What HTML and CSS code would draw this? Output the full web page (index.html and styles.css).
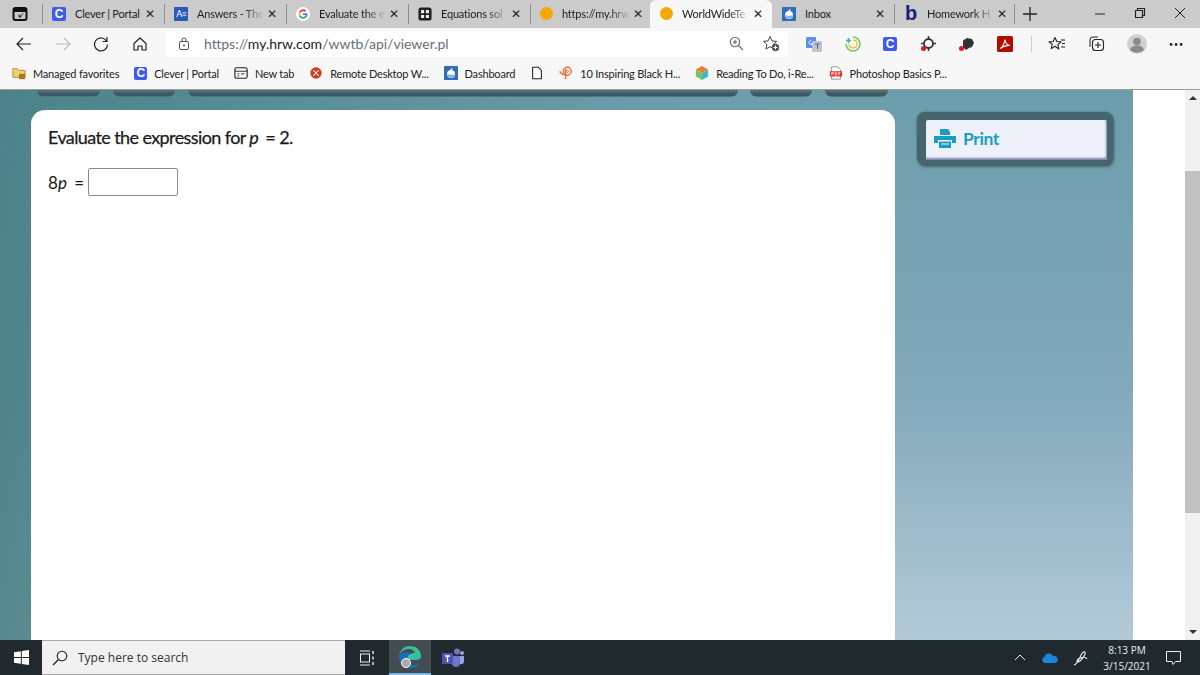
FILE: index.html
```html
<!DOCTYPE html>
<html>
<head>
    <meta charset="UTF-8">
    <title>WorldWideTeacher</title>
    <link rel="stylesheet" href="styles.css">
</head>
<body>
    <div class="tabstrip">
        <div class="tab-actions">
            <svg width="16" height="16" viewBox="0 0 16 16"><rect x="1.500" y="2" width="13" height="12" rx="2" fill="none" stroke="#111" stroke-width="2"/><rect x="2" y="3" width="12" height="3" fill="#111"/><path d="M11 7.500 7.500 11M7 8.500V11h2.500" fill="none" stroke="#111"/></svg>
        </div>
        <div class="tab">
            <span class="fav fav-clever">C</span>
            <span class="tab-title">Clever | Portal</span>
            <span class="tab-x">&#10005;</span>
        </div>
        <div class="tab">
            <span class="fav fav-answers">A&#8801;</span>
            <span class="tab-title fade">Answers - The</span>
            <span class="tab-x">&#10005;</span>
        </div>
        <div class="tab">
            <svg class="fav" viewBox="0 0 16 16"><circle cx="8" cy="8" r="8" fill="#fff"/><path d="M8 4.800a3.200 3.200 0 0 1 2.200.8l1.500-1.500A5.300 5.300 0 0 0 3.300 5.600l1.700 1.300A3.200 3.200 0 0 1 8 4.800z" fill="#ea4335"/><path d="M5 9.100 3.300 10.400a5.300 5.300 0 0 0 8.300 1.600l-1.600-1.300A3.200 3.200 0 0 1 5 9.100z" fill="#34a853"/><path d="M3.300 5.600a5.300 5.300 0 0 0 0 4.800L5 9.100a3.200 3.200 0 0 1 0-2.200z" fill="#fbbc05"/><path d="M13.200 7H8v2.200h3a2.600 2.600 0 0 1-1 1.500l1.600 1.300A5.300 5.300 0 0 0 13.200 7z" fill="#4285f4"/></svg>
            <span class="tab-title fade">Evaluate the e</span>
            <span class="tab-x">&#10005;</span>
        </div>
        <div class="tab">
            <svg class="fav" viewBox="0 0 16 16"><rect x="1.500" y="1.500" width="13" height="13" rx="2" fill="#222" stroke="#222" stroke-width="2"/><path d="M3.500 3.500h3.500v3.500H3.500zM9 3.500h3.500v3.500H9zM3.500 9h3.500v3.500H3.500zM9 9h3.500v3.500H9z" fill="#eee"/></svg>
            <span class="tab-title fade">Equations sol</span>
            <span class="tab-x">&#10005;</span>
        </div>
        <div class="tab">
            <span class="fav fav-dot"></span>
            <span class="tab-title fade">https://my.hrw</span>
            <span class="tab-x">&#10005;</span>
        </div>
        <div class="tab active">
            <span class="fav fav-dot"></span>
            <span class="tab-title fade">WorldWideTe</span>
            <span class="tab-x">&#10005;</span>
        </div>
        <div class="tab">
            <svg class="fav" viewBox="0 0 16 16"><use href="#schoology"/></svg>
            <span class="tab-title">Inbox</span>
            <span class="tab-x">&#10005;</span>
        </div>
        <div class="tab">
            <span class="fav fav-bartleby">b</span>
            <span class="tab-title fade">Homework H</span>
            <span class="tab-x">&#10005;</span>
        </div>
        <div class="new-tab">
            <svg width="14" height="14" viewBox="0 0 14 14"><path d="M7 0v14M0 7h14" stroke="#222" stroke-width="1.300"/></svg>
        </div>
        <div class="window-btns">
            <svg width="12" height="12" viewBox="0 0 12 12"><path d="M1 7h10" stroke="#222"/></svg>
            <svg width="12" height="12" viewBox="0 0 12 12"><path d="M1.500 3.500h7v7h-7zM3.500 3.500v-2h7v7h-2" fill="none" stroke="#222" stroke-width="1.200"/></svg>
            <svg width="12" height="12" viewBox="0 0 12 12"><path d="M1 1l10 10M11 1 1 11" stroke="#222"/></svg>
        </div>
    </div>

    <div class="toolbar">
        <div class="tool-btn">
            <svg width="16" height="16" viewBox="0 0 16 16"><path d="M15 8H1M7 2 1 8l6 6" fill="none" stroke="#222" stroke-width="1.200"/></svg>
        </div>
        <div class="tool-btn">
            <svg width="16" height="16" viewBox="0 0 16 16"><path d="M1 8h14M9 2l6 6-6 6" fill="none" stroke="#bbb" stroke-width="1.200"/></svg>
        </div>
        <div class="tool-btn">
            <svg width="16" height="16" viewBox="0 0 16 16"><path d="M13.500 5A6.500 6.500 0 1 0 14.500 8.500M14 1v4.500H9.500" fill="none" stroke="#222" stroke-width="1.200"/></svg>
        </div>
        <div class="tool-btn">
            <svg width="16" height="16" viewBox="0 0 16 16"><path d="M2 7.500 8 2l6 5.500V14h-4v-4H6v4H2z" fill="none" stroke="#222" stroke-width="1.200" stroke-linejoin="round"/></svg>
        </div>
        <div class="omnibox">
            <svg width="12" height="14" viewBox="0 0 12 14"><rect x="1.500" y="4.500" width="9" height="8" rx="1.500" fill="none" stroke="#555"/><path d="M4 4.500V3a2 2 0 0 1 4 0v1.500" fill="none" stroke="#555"/><circle cx="6" cy="8.500" r="1" fill="#555"/></svg>
            <span class="url"><span class="url-dim">https://</span>my.hrw.com<span class="url-dim">/wwtb/api/viewer.pl</span></span>
            <svg class="omni-zoom" width="15" height="15" viewBox="0 0 15 15"><circle cx="6" cy="6" r="4.700" fill="none" stroke="#666" stroke-width="1.100"/><path d="M9.500 9.500 14 14M6 3.800v4.400M3.800 6h4.400" stroke="#666" stroke-width="1.100"/></svg>
            <svg class="omni-star" width="18" height="17" viewBox="0 0 18 17"><path d="M8 1.500l2 4.400 4.600.5-3.400 3.100 1 4.600L8 11.700l-4.100 2.400 1-4.600L1.500 6.400l4.600-.5z" fill="none" stroke="#444" stroke-linejoin="round"/><circle cx="13.500" cy="12.500" r="3.700" fill="#555"/><path d="M13.500 10.500v4M11.500 12.500h4" stroke="#fff"/></svg>
        </div>
        <div class="ext-btns">
            <svg class="ext" viewBox="0 0 16 16"><rect x="0" y="1" width="10" height="11" rx="1" fill="#5b8fe8"/><rect x="6" y="5" width="10" height="11" rx="1" fill="#bcc6d2"/><path d="M5 4.500a2 2 0 1 0 1.600 3.200H5" fill="none" stroke="#fff"/><path d="M9 8h5M11.500 8v5" stroke="#667"/></svg>
            <svg class="ext" viewBox="0 0 16 16"><path d="M8 1a7 7 0 1 1-7 7" fill="none" stroke="#7cc35b" stroke-width="1.600"/><path d="M8 4a4 4 0 1 1-4 4" fill="none" stroke="#e8c93a" stroke-width="1.600"/><path d="M1 4.500h5M3.500 2v5" stroke="#38b8a8" stroke-width="1.600"/></svg>
            <span class="fav fav-clever ext-clever">C</span>
            <svg class="ext" viewBox="0 0 16 16"><circle cx="8.500" cy="7.500" r="4.500" fill="none" stroke="#333" stroke-width="1.800"/><path d="M8.500 0v3M8.500 12v3M1 7.500h3M13 7.500h3" stroke="#333" stroke-width="1.500"/><circle cx="3.500" cy="12.500" r="2.500" fill="#e81123"/></svg>
            <svg class="ext" viewBox="0 0 16 16"><path d="M5 4.500 9 2l5 1 2 4-2 4-3 1-3 2-3-3z" fill="#333"/><circle cx="3.500" cy="12.500" r="2.500" fill="#e81123"/></svg>
            <svg class="ext" viewBox="0 0 16 16"><rect width="16" height="16" rx="1.500" fill="#b30b00"/><path d="M3 12.500c2-1 4-4 5-9 .3 3 2 5.500 5 6-3-.5-6 .5-10 3z" fill="none" stroke="#fff" stroke-width="1.100"/></svg>
            <span class="tool-sep"></span>
            <svg class="ext ext-wide" viewBox="0 0 18 16"><path d="M7 1.500l1.800 4 4.200.4-3.200 2.800 1 4.300L7 10.300 3.200 12.600l1-4.300L1 5.900l4.200-.4z" fill="none" stroke="#222" stroke-width="1.100" stroke-linejoin="round"/><path d="M13 4h4M14 7.500h3M13 11h4" stroke="#222"/></svg>
            <svg class="ext ext-wide" viewBox="0 0 18 16"><path d="M3 11V4a3 3 0 0 1 3-3h5" fill="none" stroke="#222"/><rect x="5.500" y="3.500" width="11" height="11" rx="3" fill="none" stroke="#222" stroke-width="1.100"/><path d="M11 6v6M8 9h6" stroke="#222" stroke-width="1.100"/></svg>
            <svg class="ext avatar" viewBox="0 0 20 20"><circle cx="10" cy="10" r="10" fill="#d0d0d0"/><circle cx="10" cy="7.500" r="3.800" fill="#8a8a8a"/><path d="M3 16c1-3.500 4-4.500 7-4.500s6 1 7 4.500a10 10 0 0 1-14 0z" fill="#8a8a8a"/></svg>
            <span class="more">&#8226;&#8226;&#8226;</span>
        </div>
    </div>

    <div class="favbar">
        <div class="fav-item">
            <svg class="fav-icon" viewBox="0 0 16 16"><path d="M1 3h5l1.500 2H15v8H1z" fill="#f0cf74" stroke="#b58a2a"/><rect x="8" y="9" width="7" height="6" fill="#a97a14"/></svg>
            <span>Managed favorites</span>
        </div>
        <div class="fav-item">
            <span class="fav fav-clever fav-sm">C</span>
            <span>Clever | Portal</span>
        </div>
        <div class="fav-item">
            <svg class="fav-icon" viewBox="0 0 16 16"><rect x="1" y="2" width="14" height="12" rx="2" fill="none" stroke="#222" stroke-width="1.300"/><path d="M1 6h14" stroke="#222"/><path d="M4 9h2M8 9h4M4 11.500h2" stroke="#222"/></svg>
            <span>New tab</span>
        </div>
        <div class="fav-item">
            <svg class="fav-icon" viewBox="0 0 16 16"><circle cx="8" cy="8" r="6.500" fill="#d13b1e"/><path d="M5 5l3 3-3 3M11 5 8 8l3 3" fill="none" stroke="#fff" stroke-width="1.200"/></svg>
            <span>Remote Desktop W...</span>
        </div>
        <div class="fav-item">
            <svg class="fav-icon" viewBox="0 0 16 16"><use href="#schoology"/></svg>
            <span>Dashboard</span>
        </div>
        <div class="fav-item">
            <svg class="fav-icon" viewBox="0 0 16 16"><path d="M3 1.500h6.500L13 5v9.500H3z" fill="#fff" stroke="#222" stroke-width="1.200" stroke-linejoin="round"/></svg>
        </div>
        <div class="fav-item">
            <svg class="fav-icon" viewBox="0 0 16 16"><circle cx="9.500" cy="6" r="4.500" fill="none" stroke="#ef6c35" stroke-width="1.600"/><circle cx="9.500" cy="6" r="1.500" fill="none" stroke="#ef6c35"/><path d="M7.500 3.500V15M1 6c1 3 3 4 6 4" fill="none" stroke="#ef6c35" stroke-width="1.600"/></svg>
            <span>10 Inspiring Black H...</span>
        </div>
        <div class="fav-item">
            <svg class="fav-icon" viewBox="0 0 16 16"><path d="M8 0 15 4 8 8 1 4z" fill="#f0793a"/><path d="M1 4l7 4v8l-7-4z" fill="#7cc35b"/><path d="M15 4 8 8v8l7-4z" fill="#3fb8c8"/></svg>
            <span>Reading To Do, i-Re...</span>
        </div>
        <div class="fav-item">
            <svg class="fav-icon" viewBox="0 0 16 16"><path d="M3 1h7l3 3v11H3z" fill="#fff" stroke="#888"/><rect x="1" y="6" width="14" height="6" fill="#d9362b"/><path d="M3 7.500v3M3 7.500h2v1.500H3M7 7.500v3h1.500l.5-1.500-.5-1.500zM11 7.500v3M11 7.500h2M11 9h1.500" fill="none" stroke="#fff" stroke-width=".8"/></svg>
            <span>Photoshop Basics P...</span>
        </div>
    </div>

    <div class="viewport">
        <div class="stage">
            <div class="cut-btns">
                <span class="cut cut-a"></span>
                <span class="cut cut-b"></span>
                <span class="cut cut-c"></span>
                <span class="cut cut-d"></span>
                <span class="cut cut-e"></span>
            </div>
            <div class="stage-row">
                <div class="question-card">
                    <p class="question">Evaluate the expression for <i>p</i> = 2.</p>
                    <div class="answer-row">
                        <span class="expr">8<i>p</i> =</span>
                        <input class="answer" type="text">
                    </div>
                </div>
                <div class="side">
                    <div class="print-frame">
                        <div class="print-btn">
                            <svg width="22" height="19" viewBox="0 0 22 19"><path d="M6 0h8l2 3v3H6z" fill="#1a9dc4"/><path d="M0 7h22v7h-4v-3H4v3H0z" fill="#1a9dc4"/><path d="M5 12.500h12V19H5z" fill="#1a9dc4"/><path d="M7 15h8" stroke="#eef1f9"/></svg>
                            <span>Print</span>
                        </div>
                    </div>
                </div>
            </div>
        </div>
        <div class="page-margin"></div>
        <div class="scrollbar">
            <span class="arrow-up"></span>
            <div class="scroll-track"><div class="scroll-thumb"></div></div>
            <span class="arrow-down"></span>
        </div>
    </div>

    <div class="taskbar">
        <div class="start">
            <svg width="15" height="15" viewBox="0 0 15 15"><path d="M0 2.200 6.800 1.200V7H0zM7.800 1 15 0v7H7.800zM0 8h6.800v5.800L0 12.800zM7.800 8H15v7l-7.200-1z" fill="#fff"/></svg>
        </div>
        <div class="search">
            <svg width="16" height="16" viewBox="0 0 16 16"><circle cx="10" cy="6" r="4.800" fill="none" stroke="#222" stroke-width="1.100"/><path d="M6.500 9.500 1 15" stroke="#222" stroke-width="1.200"/></svg>
            <span>Type here to search</span>
        </div>
        <div class="task-btn">
            <svg width="16" height="16" viewBox="0 0 16 16"><path d="M1 1h10M1 15h10" stroke="#eee"/><rect x="1.500" y="4" width="9" height="8" fill="none" stroke="#eee"/><path d="M14 1v3M14 6.500v3M14 12v3" stroke="#eee" stroke-width="1.400"/></svg>
        </div>
        <div class="task-btn task-open">
            <svg width="22" height="22" viewBox="0 0 22 22"><path d="M11 0c6 0 11 4 11 10 0 3-3 4-6 4H8c0-5 3-7 8-7-1-2-3-4-6-4C5 3 1 6 0 10 1 4 5 0 11 0z" fill="#35c1a0"/><path d="M0 10c0 7 5 12 11 12 4 0 7-1 9-4-5 2-12 1-12-5 0-3 2-6 5-6C7 6 2 6 0 10z" fill="#1570c4"/><circle cx="7" cy="17" r="4.500" fill="#a9a9a9" stroke="#fff"/></svg>
        </div>
        <div class="task-btn">
            <svg width="22" height="20" viewBox="0 0 22 20"><circle cx="15" cy="3.500" r="3" fill="#6f75c9"/><circle cx="20" cy="5" r="2" fill="#9da1e0"/><path d="M10 8h8v7a4 4 0 0 1-8 0z" fill="#6f75c9"/><path d="M18 8h4v6a3 3 0 0 1-4 2z" fill="#9da1e0"/><rect x="0" y="5" width="11" height="11" rx="1" fill="#4d54b5"/><path d="M3 8h5M5.500 8v6" stroke="#fff" stroke-width="1.400"/></svg>
        </div>
        <div class="tray">
            <svg class="tray-icon" width="12" height="7" viewBox="0 0 12 7"><path d="M1 6l5-5 5 5" fill="none" stroke="#eee"/></svg>
            <svg class="tray-icon" width="16" height="10" viewBox="0 0 16 10"><path d="M3 10a3 3 0 0 1-.5-5.900A4.500 4.500 0 0 1 11 3a3.500 3.500 0 0 1 2 7z" fill="#1b87d8"/></svg>
            <svg class="tray-icon" width="16" height="16" viewBox="0 0 16 16"><path d="M1 15c4-1 5-6 7-10s5-4 4-1-5 8-7 8-1-3 2-4 6-1 7 1" fill="none" stroke="#eee" stroke-width="1.100"/></svg>
            <div class="clock">
                <span>8:13 PM</span>
                <span>3/15/2021</span>
            </div>
            <svg class="tray-icon" width="15" height="14" viewBox="0 0 15 14"><path d="M.5.500h14v10H9.500L7 13.500l-1-3H.5z" fill="none" stroke="#eee"/></svg>
        </div>
    </div>

    <svg class="defs" width="0" height="0">
        <symbol id="schoology" viewBox="0 0 16 16">
            <rect width="16" height="16" rx="1" fill="#2f6fb5"/>
            <circle cx="8" cy="9" r="4.500" fill="#fff"/>
            <path d="M4 9a4 4 0 0 0 8 0c-2 1.500-5 1.500-8 0z" fill="#7fb2e0"/>
            <path d="M7 4l3-2-1 3z" fill="#fff"/>
        </symbol>
    </svg>
</body>
</html>
```

FILE: styles.css
```css
* {
    box-sizing: border-box;
}

body {
    margin: 0;
    width: 1200px;
    height: 675px;
    display: flex;
    flex-direction: column;
    overflow: hidden;
    font-family: "Lato", sans-serif;
    font-size: 11px;
    letter-spacing: -0.2px;
    color: #222;
    background: #fff;
}

.defs {
    display: none;
}

/* tab strip */
.tabstrip {
    height: 28px;
    display: flex;
    align-items: stretch;
    background: #cbcbcb;
}

.tab-actions {
    width: 42px;
    display: flex;
    align-items: center;
    justify-content: center;
    padding-right: 2px;
}

.tab {
    width: 122px;
    display: flex;
    align-items: center;
    padding: 0 6px 1px 9px;
    border-left: 1px solid #8f8f8f;
    border-image: linear-gradient(#cbcbcb 5px, #8f8f8f 5px, #8f8f8f 23px, #cbcbcb 23px) 1;
}

.tab.active {
    margin-left: -2px;
    background: #f7f7f7;
    border: 0;
    border-radius: 6px 6px 0 0;
    padding-left: 10px;
}

.tab.active + .tab {
    border-left: 0;
    padding-left: 10px;
}

.fav {
    width: 14px;
    height: 14px;
    flex: none;
    display: flex;
    align-items: center;
    justify-content: center;
}

.fav-clever {
    background: #3f5bf0;
    color: #fff;
    border-radius: 2px;
    font-family: "Liberation Sans", sans-serif;
    font-weight: bold;
    font-size: 12px;
}

.fav-answers {
    background: #2a5ab8;
    color: #fff;
    border-radius: 1px;
    font-size: 9px;
    letter-spacing: -1px;
}

.fav-dot {
    background: #f2a900;
    border-radius: 50%;
    width: 13px;
    height: 13px;
}

.fav-bartleby {
    color: #15207a;
    font-family: "Liberation Sans", sans-serif;
    font-weight: bold;
    font-size: 20px;
    background: transparent;
}

.tab-title {
    flex: 1;
    min-width: 0;
    margin-left: 9px;
    white-space: nowrap;
}

.tab-title.fade {
    -webkit-mask-image: linear-gradient(to right, #000 70%, transparent 100%);
    mask-image: linear-gradient(to right, #000 70%, transparent 100%);
}

.tab-x {
    width: 16px;
    flex: none;
    font-family: "DejaVu Sans", sans-serif;
    font-size: 12px;
    font-weight: bold;
    text-align: center;
}

.new-tab {
    width: 30px;
    margin-left: -2px;
    display: flex;
    align-items: center;
    justify-content: center;
    border-left: 1px solid #8f8f8f;
    border-image: linear-gradient(#cbcbcb 5px, #8f8f8f 5px, #8f8f8f 23px, #cbcbcb 23px) 1;
}

.window-btns {
    flex: 1;
    display: flex;
    align-items: center;
    justify-content: flex-end;
    gap: 28px;
    padding: 0 14px 3px 0;
}

/* address bar */
.toolbar {
    height: 31px;
    display: flex;
    align-items: center;
    padding-left: 5px;
    background: #f7f7f7;
}

.tool-btn {
    width: 38.500px;
    display: flex;
    justify-content: center;
}

.omnibox {
    width: 623px;
    height: 26px;
    margin-left: 6px;
    display: flex;
    align-items: center;
    padding: 0 8px 0 13px;
    background: #fff;
    border-radius: 4px;
}

.url {
    flex: 1;
    margin-left: 14px;
    font-size: 14px;
    letter-spacing: 0;
    color: #1c1c1c;
}

.url-dim {
    color: #66707a;
}

.omni-zoom {
    margin-right: 18px;
}

.ext-btns {
    flex: 1;
    display: flex;
    align-items: center;
    padding-left: 18px;
    gap: 22.500px;
}

.ext {
    width: 16px;
    height: 16px;
    flex: none;
}

.ext-wide {
    width: 18px;
    margin-right: -1px;
}

.ext-clever {
    font-size: 12px;
}

.avatar {
    width: 20px;
    height: 20px;
}

.tool-sep {
    width: 1px;
    height: 16px;
    background: #cfcfcf;
    margin: 0 -7px 0 -4px;
}

.more {
    font-size: 7px;
    letter-spacing: 1px;
    color: #222;
}

/* favorites bar */
.favbar {
    height: 31px;
    display: flex;
    align-items: center;
    gap: 15px;
    padding: 0 0 2px 12px;
    background: #f7f7f7;
    border-bottom: 1px solid #9a9a9a;
}

.fav-item {
    display: flex;
    align-items: center;
    gap: 7px;
    white-space: nowrap;
}

.fav-icon {
    width: 14px;
    height: 14px;
    flex: none;
}

.fav-sm {
    width: 13px;
    height: 13px;
}

/* page */
.viewport {
    flex: 1;
    min-height: 0;
    display: flex;
}

.stage {
    width: 1133px;
    display: flex;
    flex-direction: column;
    overflow: hidden;
    background:
        linear-gradient(to right, rgba(70, 125, 130, 0.85), rgba(70, 125, 130, 0) 60%),
        linear-gradient(#6b9dab, #82a9ba 55%, #b3cad8);
}

.cut-btns {
    height: 8px;
    display: flex;
    flex: none;
    padding-left: 37px;
}

.cut {
    height: 7px;
    background: linear-gradient(#5a7478, #35525a 75%, #5d8288);
    border-radius: 0 0 7px 7px;
}

.cut-a {
    width: 63px;
    margin-right: 13px;
}

.cut-b {
    width: 62px;
    margin-right: 13px;
}

.cut-c {
    width: 550px;
    margin-right: 12px;
}

.cut-d {
    width: 62px;
    margin-right: 13px;
}

.cut-e {
    width: 63px;
}

.stage-row {
    flex: 1;
    min-height: 0;
    display: flex;
    padding: 12px 0 0 31px;
}

.question-card {
    width: 864px;
    background: #fff;
    border-radius: 14px 14px 0 0;
    padding: 15px 17px;
    color: #1a1a1a;
}

.question {
    margin: 0 0 19px;
    font-size: 18px;
    line-height: 24px;
    letter-spacing: -0.6px;
    -webkit-text-stroke: 0.25px #1a1a1a;
}

.question i,
.expr i {
    margin-right: 3px;
}

.answer-row {
    display: flex;
    align-items: center;
    gap: 4px;
    font-size: 17px;
    letter-spacing: 0;
}

.answer {
    width: 90px;
    height: 28px;
    background: #fff;
    border: 1px solid #8a8a8a;
    border-radius: 2px;
    padding: 0;
}

.side {
    flex: 1;
    padding: 2px 20px 0 22px;
}

.print-frame {
    height: 53px;
    padding: 8px 6px 5px 9px;
    background: #46666d;
    border-radius: 8px;
    box-shadow: 1px 2px 3px rgba(0, 0, 0, 0.35), 0 0 2px #46666d;
}

.print-btn {
    height: 40px;
    display: flex;
    align-items: center;
    gap: 7px;
    padding: 0 0 3px 8px;
    background: #eef1f9;
    border-radius: 2px;
    box-shadow: inset -1px -2px 2px #8386ae;
    color: #1a9dc4;
    font-size: 17.500px;
    font-weight: bold;
    letter-spacing: -0.4px;
}

.page-margin {
    width: 52px;
    background: #fff;
}

.scrollbar {
    width: 15px;
    display: flex;
    flex-direction: column;
    align-items: center;
    background: #f1f1f1;
    padding: 6px 0;
}

.scroll-track {
    flex: 1;
    width: 100%;
    padding-top: 71px;
}

.scroll-thumb {
    height: 342px;
    background: #c1c1c1;
}

.arrow-up {
    border: 4px solid transparent;
    border-top: 0;
    border-bottom: 4px solid #333;
}

.arrow-down {
    border: 4px solid transparent;
    border-bottom: 0;
    border-top: 4px solid #333;
}

/* windows taskbar */
.taskbar {
    height: 35px;
    flex: none;
    display: flex;
    align-items: stretch;
    background: #20292d;
    color: #eee;
}

.start {
    width: 42px;
    display: flex;
    align-items: center;
    justify-content: center;
}

.search {
    width: 303px;
    display: flex;
    align-items: center;
    gap: 10px;
    padding-left: 10px;
    background: #f1f1f1;
    border: 1px solid #a8a8a8;
    border-left: 0;
    border-right: 0;
    color: #333;
    font-family: "Open Sans", sans-serif;
    font-size: 12px;
    letter-spacing: 0;
}

.task-btn {
    width: 44px;
    display: flex;
    align-items: center;
    justify-content: center;
}

.task-open {
    width: 42px;
    background: #434c51;
    border-bottom: 2px solid #76b9ed;
}

.tray {
    flex: 1;
    display: flex;
    align-items: center;
    padding-left: 539px;
}

.tray-icon {
    flex: none;
}

.tray .tray-icon:nth-child(2) {
    margin-left: 16px;
}

.tray .tray-icon:nth-child(3) {
    margin-left: 15px;
}

.clock {
    width: 70px;
    margin-left: 3px;
    display: flex;
    flex-direction: column;
    align-items: center;
    gap: 2px;
    font-family: "Open Sans", sans-serif;
    font-size: 10px;
    letter-spacing: 0;
    line-height: 14px;
}

.tray .tray-icon:last-child {
    margin-left: 4px;
}
```
